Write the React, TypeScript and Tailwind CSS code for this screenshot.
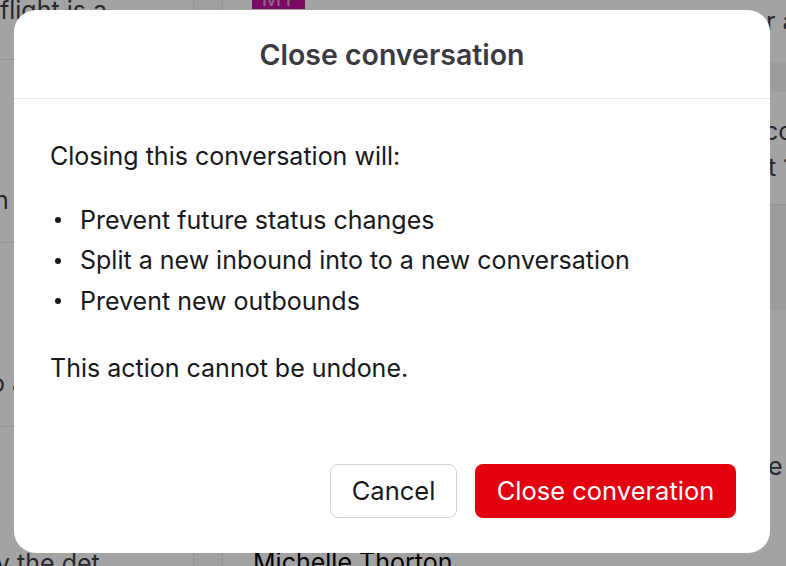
export default function App() {
  return (
    <div className="relative h-[566px] w-[786px] overflow-hidden bg-white font-['Inter',sans-serif]">
      {/* page behind the dialog */}
      <div className="flex h-full text-[25px] text-[#3f3f46]">
        <div className="w-[193px] shrink-0 overflow-hidden">
          <div className="h-[60px] border-b border-gray-200 leading-[20px] whitespace-nowrap">flight is a</div>
          <div className="h-[183px] border-b border-gray-200 pt-[122px] whitespace-nowrap">
            <span className="-ml-[6px]">n</span>
          </div>
          <div className="h-[184px] border-b border-gray-200 pt-[122px] whitespace-nowrap">
            <span className="-ml-[10px]">o a</span>
          </div>
          <div className="pt-[118px] whitespace-nowrap">
            <span className="-ml-[4px]">y the det</span>
          </div>
        </div>
        <div className="w-[30px] shrink-0 border-x border-gray-200 bg-gray-50" />
        <div className="relative flex-1">
          <div className="ml-[29px] flex h-[9px] w-[53px] items-end justify-center overflow-hidden bg-[#c0129a] text-[22px] leading-[22px] text-white/60">
            MT
          </div>
          <div className="absolute bottom-[-15px] left-[30px] text-[25px] text-black">Michelle Thorton</div>
        </div>
        <div className="w-[42px] shrink-0 overflow-hidden whitespace-nowrap">
          <div className="h-[62px] pl-[22px] pt-[8px] leading-[26px]">r a</div>
          <div className="h-[30px] bg-gray-100" />
          <div className="h-[113px] border-b border-gray-200 pl-[20px] pt-[21px] leading-[36px]">
            co<br />
            <span className="pl-[4px]">t 1</span>
          </div>
          <div className="h-[105px] bg-gray-100" />
          <div className="pl-[24px] pt-[138px]">e</div>
        </div>
      </div>

      {/* overlay */}
      <div className="absolute inset-0 flex items-start bg-black/[0.36] pl-[14px] pt-[10px]">
        <div className="flex h-[543px] w-[756px] flex-col rounded-[22px] bg-white">
          <div className="flex h-[89px] items-center justify-center border-b border-gray-200 pt-[3px]">
            <h2 className="text-[28.5px] font-semibold text-[#3b3a43]">Close conversation</h2>
          </div>

          <div className="flex-1 pl-9 pr-6 pt-[37px] text-[25px] text-[#18181b]">
            <p className="leading-10">Closing this conversation will:</p>
            <ul className="mt-6 mb-[26px]">
              {["Prevent future status changes", "Split a new inbound into to a new conversation", "Prevent new outbounds"].map(item => (
                <li key={item} className="flex h-[40.5px] items-center">
                  <span className="ml-[5px] mr-[19px] h-[6px] w-[6px] shrink-0 rounded-full bg-[#18181b]" />
                  {item}
                </li>
              ))}
            </ul>
            <p className="leading-10">This action cannot be undone.</p>
          </div>

          <div className="flex justify-end gap-[18px] pr-[34px] pb-[35px]">
            <button className="h-[54px] w-[127px] rounded-[8px] border border-gray-300 bg-white text-[25.5px] text-[#18181b]">
              Cancel
            </button>
            <button className="h-[54px] w-[261px] rounded-[8px] bg-[#e3000f] text-[25.5px] text-white">
              Close converation
            </button>
          </div>
        </div>
      </div>
    </div>
  );
}
